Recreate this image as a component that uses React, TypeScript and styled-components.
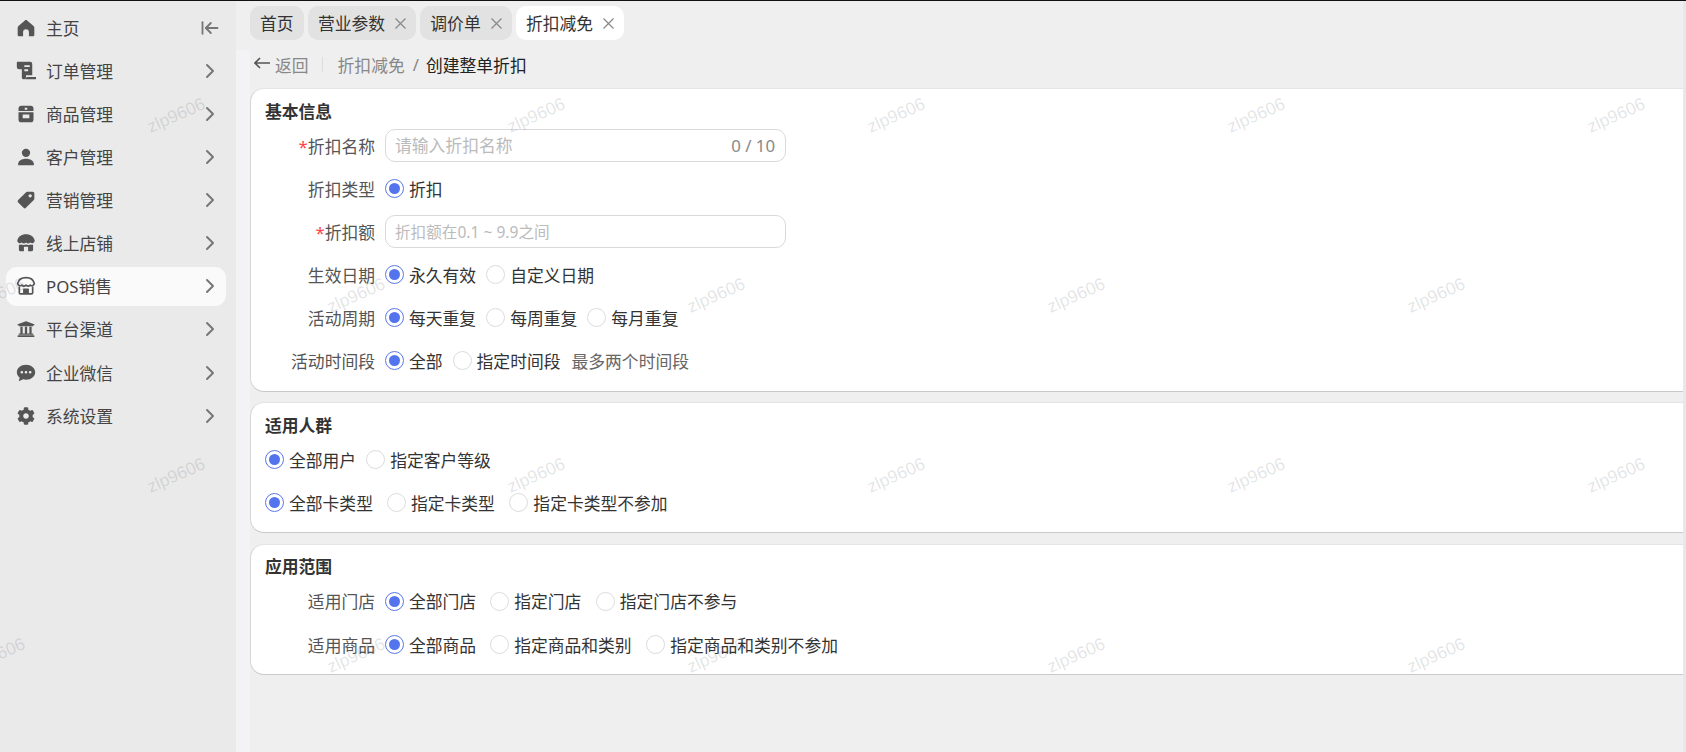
import React from "react";
import styled, { createGlobalStyle } from "styled-components";
import { ArrowLeftToLine, ChevronRight } from "lucide-react";
import { FaCog, FaUniversity } from "react-icons/fa";

const GlobalStyle = createGlobalStyle`
  html, body {
    margin: 0;
    padding: 0;
    height: 100%;
    overflow: hidden;
    font-family: "Noto Sans", "Noto Sans CJK SC", sans-serif;
    font-size: 16.8px;
    color: #333;
  }
  * {
    box-sizing: border-box;
  }
`;

const Page = styled.div`
  position: relative;
  display: grid;
  grid-template-columns: 236px 1fr 3px;
  width: 100vw;
  height: 100vh;
  overflow: hidden;
  border-top: 1px solid #111;
`;

const Sidebar = styled.nav`
  display: flex;
  flex-direction: column;
  padding: 7px 10px 0 6px;
  background: #eaeaea;
`;

const NavItem = styled.div<{ $active?: boolean }>`
  display: flex;
  align-items: center;
  height: 39px;
  margin-bottom: 4.15px;
  padding: 0 4px 0 10px;
  border-radius: 11px;
  color: #444;
  background: ${({ $active }) => ($active ? "#fafafa" : "transparent")};
`;

const NavIcon = styled.span`
  display: flex;
  align-items: center;
  justify-content: center;
  width: 20px;
  height: 20px;
  margin-right: 10px;
  color: #555;
`;

const NavLabel = styled.span`
  flex: 1;
`;

const NavArrow = styled.span`
  display: flex;
  align-items: center;
  justify-content: center;
  width: 24px;
  color: #777;
`;

const RightEdge = styled.div`
  background: #e8e8e8;
`;

const Main = styled.main`
  display: flex;
  flex-direction: column;
  min-width: 0;
  background: #f3f3f5;
`;

const TabBar = styled.div`
  display: flex;
  gap: 4.3px;
  height: 49px;
  padding: 5px 0 0 14px;
  background: #efefef;
`;

const Tab = styled.div<{ $active?: boolean }>`
  display: flex;
  align-items: center;
  gap: 10px;
  height: 34px;
  padding: 0 10px;
  border-radius: 10px;
  color: #333;
  background: ${({ $active }) => ($active ? "#fff" : "#e2e2e2")};
`;

const Content = styled.div`
  flex: 1;
  margin-left: 14px;
  background: #efefef;
`;

const Crumbs = styled.div`
  display: flex;
  align-items: center;
  height: 38px;
  padding: 0 0 9px 4px;
  color: #888;
`;

const BackArrow = styled.svg`
  width: 16px;
  height: 12px;
  margin: -3px 5px 0 0;
  color: #555;
`;

const CrumbDivider = styled.span`
  width: 1px;
  height: 15px;
  margin: 0 15px 0 13px;
  background: #ddd;
`;

const CrumbSlash = styled.span`
  margin: 0 7px 0 8px;
`;

const CrumbCurrent = styled.span`
  color: #222;
`;

const Card = styled.section<{ $gap?: number; $top?: number; $bottom?: number }>`
  margin-bottom: ${({ $gap }) => $gap ?? 10}px;
  padding: ${({ $top }) => $top ?? 10}px 0 ${({ $bottom }) => $bottom ?? 9}px;
  background: #fff;
  border: 1px solid #e4e4e4;
  border-right: none;
  border-bottom-color: #c9c9c9;
  border-left-color: #d6d6d6;
  border-radius: 14px 0 0 14px;
`;

const CardTitle = styled.h2`
  height: 25px;
  margin: 0;
  padding-left: 14px;
  font-size: 16.8px;
  font-weight: 700;
  line-height: 25px;
  color: #333;
`;

const Row = styled.div<{ $indent?: boolean; $height?: number }>`
  display: flex;
  align-items: center;
  height: ${({ $height }) => $height ?? 43}px;
  padding-left: ${({ $indent }) => ($indent ? 14 : 0)}px;
`;

const Label = styled.label`
  flex: none;
  width: 124px;
  margin-right: 10px;
  text-align: right;
  color: #555;
`;

const Star = styled.span`
  color: #f44;
`;

const InputBox = styled.div`
  display: flex;
  align-items: center;
  width: 401px;
  height: 33px;
  padding: 0 10px 0 9px;
  background: #fff;
  border: 1px solid #d9d9d9;
  border-radius: 10px;
`;

const TextInput = styled.input<{ $small?: boolean }>`
  flex: 1;
  min-width: 0;
  padding: 0;
  border: none;
  outline: none;
  background: transparent;
  font-family: inherit;
  font-size: ${({ $small }) => ($small ? 15.6 : 16.8)}px;
  &::placeholder {
    color: #bbb;
    opacity: 1;
  }
`;

const Counter = styled.span`
  color: #888;
`;

const Option = styled.span<{ $gap?: number }>`
  display: inline-flex;
  align-items: center;
  margin-right: ${({ $gap }) => $gap ?? 10}px;
  color: #333;
`;

const RadioDot = styled.span<{ $on?: boolean }>`
  display: inline-flex;
  align-items: center;
  justify-content: center;
  flex: none;
  width: 19px;
  height: 19px;
  margin-right: 5px;
  background: #fff;
  border: 1px solid ${({ $on }) => ($on ? "#5b78ea" : "#dcdcdc")};
  border-radius: 50%;
  &::after {
    content: "";
    display: ${({ $on }) => ($on ? "block" : "none")};
    width: 11px;
    height: 11px;
    background: #5474ee;
    border-radius: 50%;
  }
`;

const Hint = styled.span`
  margin-left: 1px;
  color: #666;
`;

const WatermarkLayer = styled.div`
  position: absolute;
  inset: 0;
  padding-top: 24px;
  overflow: hidden;
  pointer-events: none;
`;

const WatermarkRow = styled.div<{ $shift?: boolean }>`
  display: flex;
  width: 2400px;
  height: 180px;
  margin-left: ${({ $shift }) => ($shift ? -184 : -4)}px;
`;

const Watermark = styled.span`
  display: flex;
  flex: none;
  align-items: center;
  justify-content: center;
  width: 360px;
  height: 180px;
  font-family: "Liberation Sans", sans-serif;
  font-size: 17.5px;
  color: rgba(60, 60, 70, 0.15);
  transform: rotate(-24deg);
`;

const Glyph = ({ children }: { children: React.ReactNode }) => (
  <svg width="20" height="20" viewBox="0 0 24 24" fill="currentColor" fillRule="evenodd">
    {children}
  </svg>
);

const HomeIcon = () => (
  <Glyph>
    <path d="M12 2.500c-.5 0-1 .2-1.400.5L3 9.600c-.6.5-1 1.300-1 2.100V20c0 1.100.9 2 2 2h4.500v-5a3.500 3.500 0 0 1 7 0v5H20c1.100 0 2-.9 2-2v-8.300c0-.8-.4-1.600-1-2.100L13.400 3c-.4-.3-.9-.5-1.400-.5z" />
  </Glyph>
);

const OrderIcon = () => (
  <Glyph>
    <path d="M1.500 1H17a2.500 2.500 0 0 1 2.500 2.500V17H12v3a2.200 2.200 0 0 1-2.500 2A2.300 2.300 0 0 1 7 20V10H4a3 3 0 0 1-3-3V1.500zM10 5v2.200h6.500V5zM10 10v2.200h4.500V10z" />
    <path d="M12.500 19.200H24V22H11c.9-.6 1.500-1.700 1.500-2.800z" />
  </Glyph>
);

const BoxIcon = () => (
  <Glyph>
    <path d="M6.500 2h11A3.500 3.500 0 0 1 21 5.500v13a3.500 3.500 0 0 1-3.500 3.500h-11A3.500 3.500 0 0 1 3 18.500v-13A3.500 3.500 0 0 1 6.500 2zM3 8.500V10h18V8.500zM8 12.500V17h8v-4.500zM10.500 4.500v2.500h3V4.500z" />
  </Glyph>
);

const UserIcon = () => (
  <Glyph>
    <circle cx="12" cy="7" r="5" />
    <path d="M2.500 21c0-4.500 4.300-7 9.500-7s9.500 2.500 9.500 7v1h-19z" />
  </Glyph>
);

const TagIcon = () => (
  <Glyph>
    <path d="M13.500 2H20a2 2 0 0 1 2 2v6.500c0 .5-.2 1-.6 1.400l-9.500 9.500a2 2 0 0 1-2.800 0l-6.500-6.500a2 2 0 0 1 0-2.800L12.100 2.600c.4-.4.9-.6 1.400-.6zM17 5a2 2 0 1 0 0 4 2 2 0 0 0 0-4z" />
  </Glyph>
);

const ShopIcon = () => (
  <Glyph>
    <path d="M12 1.500c5.500 0 9.500 3 10.500 7.500a3.200 3.200 0 0 1-5.300 2.400 3.800 3.800 0 0 1-5.200 0 3.800 3.800 0 0 1-5.200 0A3.200 3.200 0 0 1 1.500 9C2.500 4.500 6.500 1.500 12 1.500z" />
    <path d="M3.500 14c1.300.4 2.500.3 3.500-.2 1.500.8 3.300.9 5 .1 1.700.8 3.500.7 5-.1 1 .5 2.200.6 3.500.2V20a2 2 0 0 1-2 2H5.500a2 2 0 0 1-2-2zM9.500 16.500V22h5v-5.500z" />
  </Glyph>
);

const StoreOutlineIcon = () => (
  <svg width="20" height="20" viewBox="0 0 24 24" fill="none" stroke="currentColor" strokeWidth="2" strokeLinejoin="round">
    <path d="M12 2c5 0 9 2.800 10 7a3 3 0 0 1-5 1.900 3.600 3.600 0 0 1-5 0 3.600 3.600 0 0 1-5 0A3 3 0 0 1 2 9c1-4.200 5-7 10-7z" />
    <path d="M4 12.500V20a1.500 1.500 0 0 0 1.500 1.500h13A1.500 1.500 0 0 0 20 20v-7.500" />
    <path d="M9.500 21.500V16h5v5.500" fill="currentColor" />
  </svg>
);

const ChatIcon = () => (
  <Glyph>
    <path d="M12 2C5.900 2 1 5.900 1 11c0 2.600 1.300 4.900 3.300 6.500L3.500 22l5-2.400c1.100.3 2.300.4 3.500.4 6.100 0 11-4 11-9s-4.900-9-11-9zM7 9.500a1.600 1.600 0 1 0 0 3.200 1.600 1.600 0 0 0 0-3.200zM12 9.500a1.600 1.600 0 1 0 0 3.200 1.600 1.600 0 0 0 0-3.200zM17 9.500a1.600 1.600 0 1 0 0 3.200 1.600 1.600 0 0 0 0-3.200z" />
  </Glyph>
);

const CloseIcon = () => (
  <svg width="11" height="11" viewBox="0 0 11 11" stroke="#888" strokeWidth="1.2">
    <path d="M.5.5l10 10M10.500.5l-10 10" />
  </svg>
);

const navItems = [
  { label: "主页", icon: <HomeIcon /> },
  { label: "订单管理", icon: <OrderIcon /> },
  { label: "商品管理", icon: <BoxIcon /> },
  { label: "客户管理", icon: <UserIcon /> },
  { label: "营销管理", icon: <TagIcon /> },
  { label: "线上店铺", icon: <ShopIcon /> },
  { label: "POS销售", icon: <StoreOutlineIcon />, active: true },
  { label: "平台渠道", icon: <FaUniversity size={18} /> },
  { label: "企业微信", icon: <ChatIcon /> },
  { label: "系统设置", icon: <FaCog size={18} /> },
];

const tabs = [
  { label: "首页" },
  { label: "营业参数", closable: true },
  { label: "调价单", closable: true },
  { label: "折扣减免", closable: true, active: true },
];

function Radio({ on, gap, children }: { on?: boolean; gap?: number; children: React.ReactNode }) {
  return (
    <Option $gap={gap}>
      <RadioDot $on={on} />
      {children}
    </Option>
  );
}

export default function App() {
  return (
    <>
      <GlobalStyle />
      <Page>
        <Sidebar>
          {navItems.map((item, i) => (
            <NavItem key={item.label} $active={item.active}>
              <NavIcon>{item.icon}</NavIcon>
              <NavLabel>{item.label}</NavLabel>
              <NavArrow>
                {i === 0 ? <ArrowLeftToLine size={20} strokeWidth={2.2} /> : <ChevronRight size={24} strokeWidth={2} />}
              </NavArrow>
            </NavItem>
          ))}
        </Sidebar>
        <Main>
          <TabBar>
            {tabs.map((tab) => (
              <Tab key={tab.label} $active={tab.active}>
                {tab.label}
                {tab.closable && <CloseIcon />}
              </Tab>
            ))}
          </TabBar>
          <Content>
            <Crumbs>
              <BackArrow viewBox="0 0 16 12" fill="none" stroke="currentColor" strokeWidth="1.6">
                <path d="M1 6h15M6 1 1 6l5 5" />
              </BackArrow>
              返回
              <CrumbDivider />
              折扣减免
              <CrumbSlash>/</CrumbSlash>
              <CrumbCurrent>创建整单折扣</CrumbCurrent>
            </Crumbs>

            <Card>
              <CardTitle>基本信息</CardTitle>
              <Row>
                <Label>
                  <Star>*</Star>折扣名称
                </Label>
                <InputBox>
                  <TextInput placeholder="请输入折扣名称" />
                  <Counter>0 / 10</Counter>
                </InputBox>
              </Row>
              <Row>
                <Label>折扣类型</Label>
                <Radio on>折扣</Radio>
              </Row>
              <Row>
                <Label>
                  <Star>*</Star>折扣额
                </Label>
                <InputBox>
                  <TextInput $small placeholder="折扣额在0.1 ~ 9.9之间" />
                </InputBox>
              </Row>
              <Row>
                <Label>生效日期</Label>
                <Radio on>永久有效</Radio>
                <Radio>自定义日期</Radio>
              </Row>
              <Row>
                <Label>活动周期</Label>
                <Radio on>每天重复</Radio>
                <Radio>每周重复</Radio>
                <Radio>每月重复</Radio>
              </Row>
              <Row>
                <Label>活动时间段</Label>
                <Radio on>全部</Radio>
                <Radio>指定时间段</Radio>
                <Hint>最多两个时间段</Hint>
              </Row>
            </Card>

            <Card $gap={11} $bottom={8}>
              <CardTitle>适用人群</CardTitle>
              <Row $indent>
                <Radio on>全部用户</Radio>
                <Radio>指定客户等级</Radio>
              </Row>
              <Row $indent>
                <Radio on gap={14}>全部卡类型</Radio>
                <Radio gap={14.5}>指定卡类型</Radio>
                <Radio>指定卡类型不参加</Radio>
              </Row>
            </Card>

            <Card $top={9} $bottom={8}>
              <CardTitle>应用范围</CardTitle>
              <Row $height={44}>
                <Label>适用门店</Label>
                <Radio on gap={14}>全部门店</Radio>
                <Radio gap={14.5}>指定门店</Radio>
                <Radio>指定门店不参与</Radio>
              </Row>
              <Row>
                <Label>适用商品</Label>
                <Radio on gap={14}>全部商品</Radio>
                <Radio gap={14.5}>指定商品和类别</Radio>
                <Radio>指定商品和类别不参加</Radio>
              </Row>
            </Card>
          </Content>
        </Main>
        <RightEdge />
        <WatermarkLayer>
          {[false, true, false, true].map((shift, r) => (
            <WatermarkRow key={r} $shift={shift}>
              {[0, 1, 2, 3, 4, 5].map((c) => (
                <Watermark key={c}>zlp9606</Watermark>
              ))}
            </WatermarkRow>
          ))}
        </WatermarkLayer>
      </Page>
    </>
  );
}
